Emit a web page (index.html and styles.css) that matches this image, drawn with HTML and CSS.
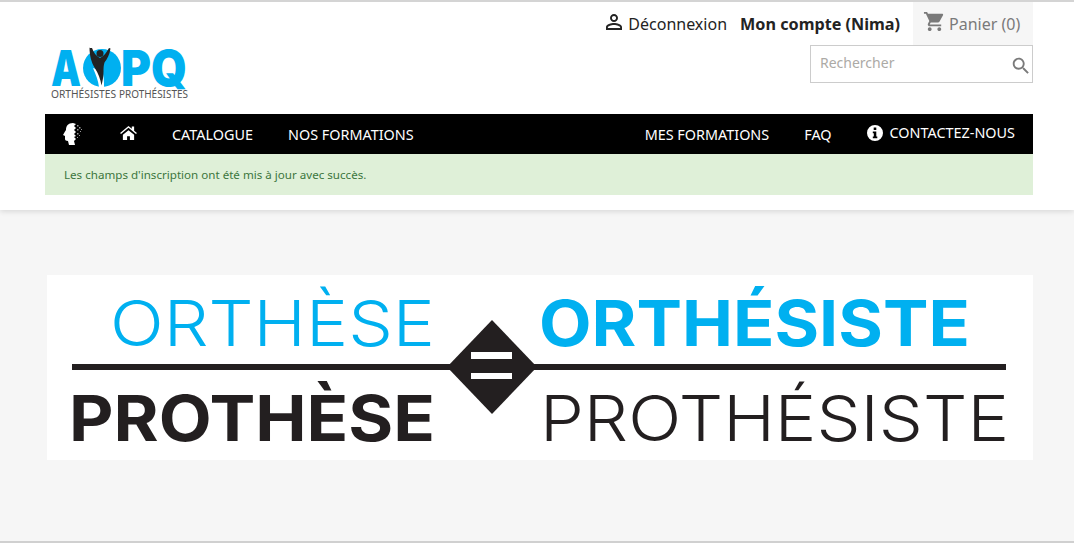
FILE: index.html
```html
<!DOCTYPE html>
<html lang="fr">
<head>
  <meta charset="UTF-8">
  <meta name="viewport" content="width=device-width, initial-scale=1.0">
  <title>AOPQ</title>
  <link rel="stylesheet" href="styles.css">
</head>
<body>

  <header class="header">
    <div class="top-row">
      <a class="user-link" href="#">
        <svg class="user-icon" viewBox="0 0 24 24"><path d="M12 5.9c1.16 0 2.1.94 2.1 2.1s-.94 2.1-2.1 2.1S9.9 9.16 9.9 8s.94-2.1 2.1-2.1m0 9c2.97 0 6.1 1.46 6.1 2.1v1.1H5.9V17c0-.64 3.13-2.1 6.1-2.1M12 4C9.79 4 8 5.79 8 8s1.79 4 4 4 4-1.79 4-4-1.79-4-4-4zm0 9c-2.67 0-8 1.34-8 4v3h16v-3c0-2.66-5.33-4-8-4z"/></svg>
        Déconnexion
      </a>
      <a class="account-link" href="#">Mon compte (Nima)</a>
      <a class="cart" href="#">
        <svg class="cart-icon" viewBox="0 0 24 24"><path d="M7 18c-1.1 0-1.99.9-1.99 2S5.9 22 7 22s2-.9 2-2-.9-2-2-2zM1 2v2h2l3.6 7.59-1.35 2.45c-.16.28-.25.61-.25.96 0 1.1.9 2 2 2h12v-2H7.42c-.14 0-.25-.11-.25-.25l.03-.12.9-1.63h7.45c.75 0 1.41-.41 1.75-1.03l3.58-6.49c.08-.14.12-.31.12-.48 0-.55-.45-1-1-1H5.21l-.94-2H1zm16 16c-1.1 0-1.99.9-1.99 2s.89 2 1.99 2 2-.9 2-2-.9-2-2-2z"/></svg>
        Panier (0)
      </a>
    </div>

    <div class="brand-row">
      <svg class="logo" viewBox="0 0 140 50">
        <text class="logo-big" x="0" y="36" textLength="30" lengthAdjust="spacingAndGlyphs">A</text>
        <circle cx="51" cy="18" r="19" fill="#00b0f0"/>
        <path d="M42 18c3 7 5 12 6 19h5c0-6 0-11-2-16z" fill="#fff"/>
        <path d="M38-2l3 0c2 5 4 8 8 10 4-2 6-5 9-10l1.500 .5c-1 6-3 10-6 14-1 3-1 6-1 9 0 5-1 10-2 14-1-6-3-12-7-18-3-5-5-12-5-20z" fill="#222"/>
        <circle cx="49" cy="3.500" r="3.500" fill="#222"/>
        <text class="logo-big" x="70" y="36" textLength="66" lengthAdjust="spacingAndGlyphs">PQ</text>
        <text class="logo-small" x="0" y="47.500" textLength="65" lengthAdjust="spacingAndGlyphs">ORTHÉSISTES</text>
        <text class="logo-small" x="68" y="47.500" textLength="69" lengthAdjust="spacingAndGlyphs">PROTHÉSISTES</text>
      </svg>
      <form class="search">
        <input class="search-input" type="text" placeholder="Rechercher">
        <svg class="search-icon" viewBox="0 0 24 24"><path d="M15.5 14h-.79l-.28-.27C15.41 12.59 16 11.11 16 9.5 16 5.91 13.09 3 9.5 3S3 5.91 3 9.5 5.91 16 9.5 16c1.61 0 3.09-.59 4.23-1.57l.27.28v.79l5 4.99L20.49 19l-4.99-5zm-6 0C7.01 14 5 11.99 5 9.5S7.01 5 9.5 5 14 7.01 14 9.5 11.99 14 9.5 14z"/></svg>
      </form>
    </div>

    <nav class="nav">
      <a class="nav-head" href="#">
        <svg viewBox="0 0 20 24" width="20" height="24">
          <path d="M10 1C5 1 3 4 3 8L2 9.500 0 13l2 1v3c0 1 1 2 3 2l1 4h6l-1-4 2-2-2-2 2-1-2-2 2-2-2-2 2-2-2-2 2-2z" fill="#fff"/>
          <g fill="#999"><rect x="14" y="3" width="1.500" height="1.500"/><rect x="16" y="5" width="1.500" height="1.500"/><rect x="14" y="7" width="1.500" height="1.500"/><rect x="17" y="9" width="1" height="1"/><rect x="14" y="11" width="1.500" height="1.500"/><rect x="18" y="7" width="1" height="1"/><rect x="16" y="13" width="1" height="1"/><rect x="14" y="15" width="1" height="1"/></g>
        </svg>
      </a>
      <a class="nav-home" href="#">
        <svg viewBox="0 0 18 16" width="17" height="15"><path d="M9 1L0 8.500l1 1.200L9 3l8 6.700 1-1.200-3-2.500V1.500h-2.500v2.400zM3 10.500V16h4.500v-4h3v4H15v-5.500L9 5.500z" fill="#fff"/></svg>
      </a>
      <a class="nav-link" href="#">CATALOGUE</a>
      <a class="nav-link" href="#">NOS FORMATIONS</a>
      <span class="nav-space"></span>
      <a class="nav-link" href="#">MES FORMATIONS</a>
      <a class="nav-link" href="#">FAQ</a>
      <a class="nav-link nav-contact" href="#">
        <svg viewBox="0 0 16 16" width="16" height="16"><path fill-rule="evenodd" d="M8 0a8 8 0 1 0 0 16A8 8 0 0 0 8 0zM6.700 2.600h2.600v2.300H6.700zM5.800 6.500h3.500v5h1v1.800H5.800v-1.800h1v-3.200h-1z" fill="#fff"/></svg>
        CONTACTEZ-NOUS
      </a>
    </nav>

    <div class="notice">Les champs d'inscription ont été mis à jour avec succès.</div>
  </header>

  <main class="content">
    <svg class="banner" viewBox="0 0 986 185">
      <text class="b-light b-blue" x="63" y="71" textLength="325" lengthAdjust="spacingAndGlyphs">ORTHÈSE</text>
      <text class="b-heavy b-blue" x="492" y="71" textLength="431" lengthAdjust="spacingAndGlyphs">ORTHÉSISTE</text>
      <rect x="25" y="89" width="934" height="6" fill="#231f20"/>
      <path d="M445 45l45 47-45 47-45-47z" fill="#231f20"/>
      <rect x="424" y="77" width="41" height="7" fill="#fff"/>
      <rect x="424" y="98" width="41" height="6" fill="#fff"/>
      <text class="b-heavy b-dark" x="22" y="166" textLength="366" lengthAdjust="spacingAndGlyphs">PROTHÈSE</text>
      <text class="b-light b-dark" x="493" y="166" textLength="469" lengthAdjust="spacingAndGlyphs">PROTHÉSISTE</text>
    </svg>
  </main>

  <div class="page-end"></div>

</body>
</html>
```

FILE: styles.css
```css
body {
  font-family: "Noto Sans", sans-serif;
  margin: 0;
  padding: 0;
  height: 543px;
  overflow: hidden;
  background-color: #f6f6f6;
  color: #232323;
}

a {
  color: inherit;
  text-decoration: none;
}

.header {
  height: 208px;
  padding: 0 41px 0 45px;
  background-color: #fff;
  border-top: 2px solid #d4d4d4;
  box-shadow: 0 2px 5px 0 rgba(0, 0, 0, 0.11);
}

.top-row {
  display: flex;
  justify-content: flex-end;
  align-items: center;
  height: 43px;
  font-size: 16px;
}

.user-link {
  display: flex;
  align-items: center;
  gap: 2px;
  margin-right: 13px;
}

.user-icon {
  width: 24px;
  height: 24px;
  fill: #232323;
  margin-bottom: 3px;
}

.account-link {
  font-size: 16.2px;
  font-weight: 700;
  margin-right: 13px;
}

.cart {
  display: flex;
  align-items: center;
  gap: 3px;
  width: 120px;
  height: 43px;
  padding-left: 10px;
  box-sizing: border-box;
  background-color: #f6f6f6;
  color: #7a7a7a;
}

.cart-icon {
  width: 23px;
  height: 23px;
  fill: #7a7a7a;
  margin-bottom: 4px;
}

.brand-row {
  display: flex;
  justify-content: space-between;
  align-items: flex-start;
  height: 69px;
}

.logo {
  width: 140px;
  height: 50px;
  margin: 5px 0 0 6px;
  overflow: visible;
}

.logo-big {
  font-family: "Inter", sans-serif;
  font-weight: 900;
  font-size: 49px;
  fill: #00b0f0;
}

.logo-small {
  font-family: "Noto Sans", sans-serif;
  font-size: 11.5px;
  fill: #555;
}

.search {
  position: relative;
}

.search-input {
  display: block;
  width: 223px;
  height: 38px;
  padding: 0 30px 4px 9px;
  box-sizing: border-box;
  border: 1px solid #ccc;
  background-color: #fff;
  font-family: "Noto Sans", sans-serif;
  font-size: 14px;
  outline: none;
}

.search-input::placeholder {
  color: #acaaa6;
  opacity: 1;
}

.search-icon {
  position: absolute;
  right: 1px;
  top: 10px;
  width: 22px;
  height: 22px;
  fill: #7a7a7a;
}

.nav {
  display: flex;
  align-items: center;
  height: 40px;
  background-color: #000;
  color: #fff;
  font-size: 14.4px;
}

.nav-head {
  display: flex;
  margin-left: 18px;
}

.nav-home {
  display: flex;
  margin-left: 37px;
  margin-bottom: 3px;
}

.nav-link {
  margin-left: 35px;
}

.nav-home + .nav-link {
  margin-left: 35px;
}

.nav-space {
  flex: 1;
}

.nav-contact {
  display: flex;
  align-items: center;
  gap: 7px;
  margin-right: 18px;
  margin-bottom: 3px;
}

.notice {
  height: 41px;
  padding-left: 19px;
  line-height: 41px;
  background-color: #dff0d8;
  color: #3c763d;
  font-size: 11.6px;
}

.content {
  padding: 65px 41px 0 47px;
}

.banner {
  display: block;
  width: 986px;
  height: 185px;
  background-color: #fff;
}

.banner text {
  font-family: "Inter", sans-serif;
  font-size: 63px;
}

.b-light {
  font-weight: 350;
}

.b-heavy {
  font-weight: 700;
}

.b-blue {
  fill: #00b0f0;
}

.b-dark {
  fill: #231f20;
}

.page-end {
  height: 2px;
  margin-top: 81px;
  background-color: #d0d0d0;
}
```
